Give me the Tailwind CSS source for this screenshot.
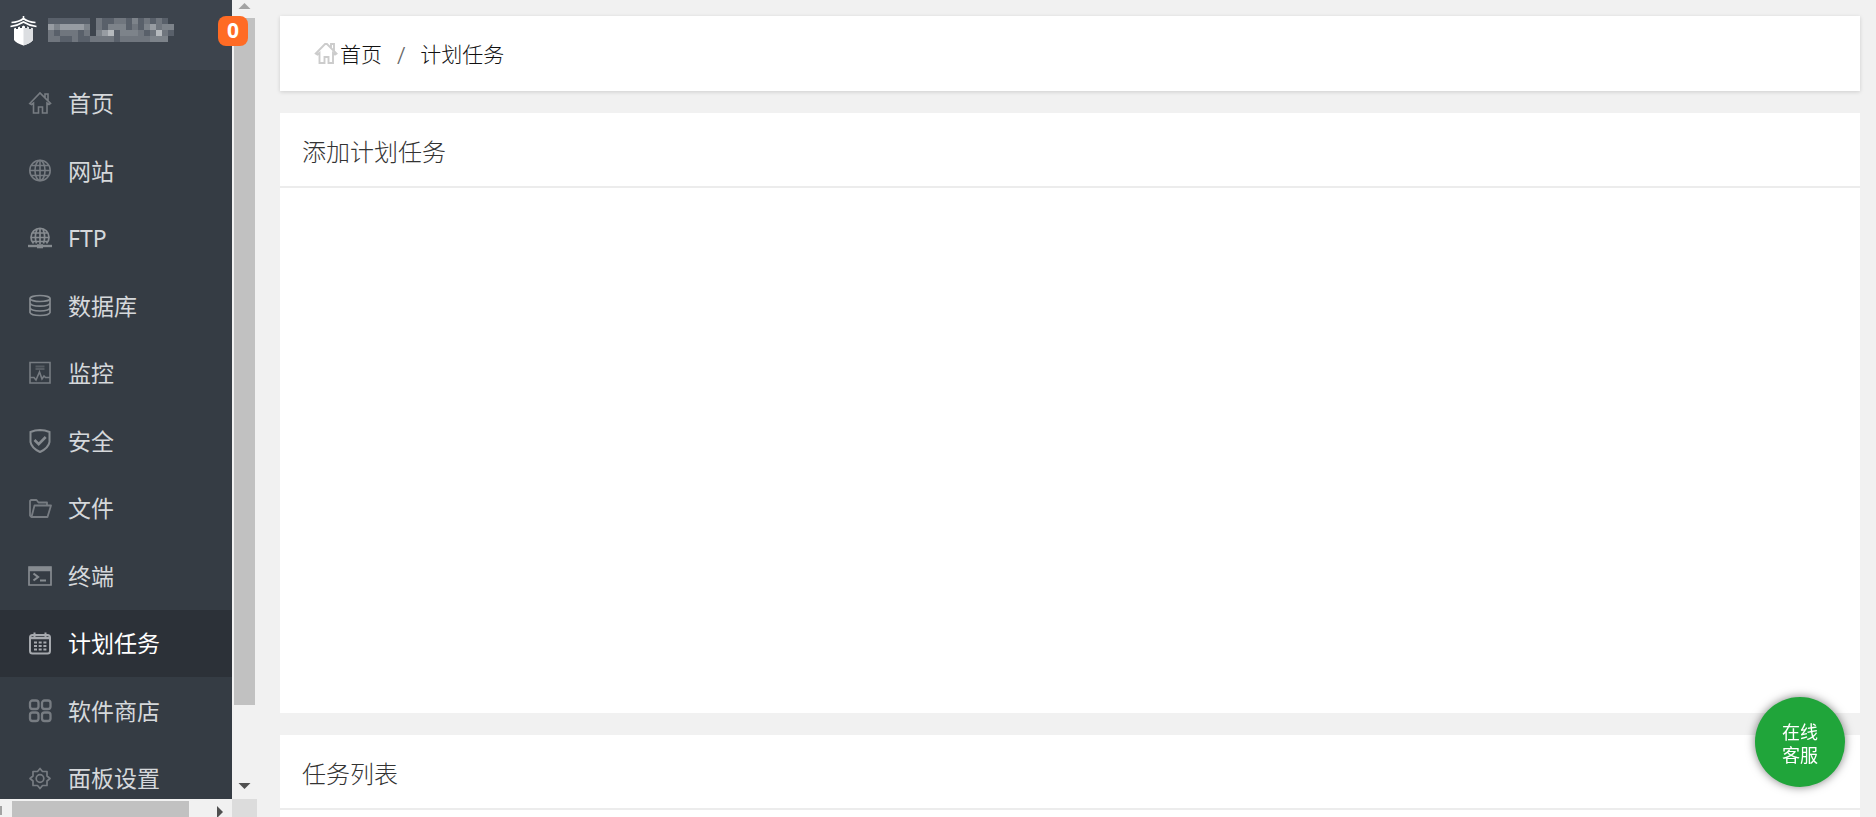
<!DOCTYPE html>
<html lang="zh-CN">
<head>
    <meta charset="UTF-8">
    <meta name="viewport" content="width=device-width, initial-scale=1.0">
    <title>计划任务</title>
    <script src="https://cdn.jsdelivr.net/npm/@tailwindcss/browser@4"></script>
</head>
<body class="flex h-screen overflow-hidden bg-[#f1f1f1] font-['Noto_Sans','Noto_Sans_CJK_SC',sans-serif]">
    <!-- Sidebar with its scrollbars -->
    <aside class="relative grid shrink-0 grid-cols-[232px_25px] grid-rows-[minmax(0,1fr)_18px]">
        <div class="overflow-hidden bg-[#353c44]">
            <div class="flex h-[70px] items-start gap-[11px] bg-[#3d444d] px-2.5 pt-4">
                <svg class="h-[30px] w-[27px] shrink-0" viewBox="0 0 27 30">
                    <path d="M13.500 0v3M1.500 6.500Q9 6 13.500 2.500 18 6 25.500 6.500M.5 10.500Q8 9.500 13.500 6 19 9.500 26.500 10.500" fill="none" stroke="#fff" stroke-width="1.600"/>
                    <path d="M4 12.500l2-.7v1.200h2v-1.800l2-.8v1.500h2v-1.500l1.500-.8 1.500.8v1.500h2v-1.500l2 .8v1.800h2v-1.200l2 .7V24q-2 3-9.500 5.500Q6 27 4 24z" fill="#fff"/>
                    <path d="M13.500 12H17v-1.500l2 .8v1.800h2v-1.200l2 .7V24q-2 3-9.500 5.500z" fill="#dcdee1"/>
                </svg>
                <!-- Masked account name -->
                <svg class="mt-0.5 h-6 w-[126px] shrink-0" viewBox="0 0 21 4" shape-rendering="crispEdges" fill="none" stroke-width="1">
                    <g stroke="#7d838a">
                        <path d="M0 1.500h4M5 1.500h2M8 2.500h1M10 1.500h3M12 2.500h2M14 .5h1M14 2.500h1M16 1.500h2M17 3.500h3M19 1.500h2"/>
                    </g>
                    <g stroke="#979ca2">
                        <path d="M0 1.500h1M2 1.500h2M4 1.500h2M9 2.500h2M18 2.500h1M17 1.500h1"/>
                    </g>
                    <g stroke="#70767e">
                        <path d="M0 2.500h1M2 2.500h3M6 2.500h1M0 3.500h2M4 3.500h1M7 3.500h4M8 .5h1M8 1.500h1M11 .5h1M12 3.500h3M12 .5h1M14 1.500h1M15 3.500h2M16 .5h1M17 2.500h1M18 .5h1M19 2.500h1M15 2.500h1M18 1.500h1"/>
                    </g>
                    <g stroke="#59606a">
                        <path d="M0 .5h7M1 2.500h1M5 2.500h1M2 3.500h2M5 3.500h2M9 .5h2M9 1.500h1M11 2.500h1M11 3.500h1M13 .5h1M13 1.500h1M15 .5h1M15 1.500h1M16 2.500h1M17 .5h1M19 .5h1M20 2.500h1"/>
                    </g>
                    <path d="M10 2.500h1M18 2.500h1" stroke="#b5b9bd"/>
                </svg>
            </div>
            <!-- Menu -->
            <nav>
                <ul class="grid h-[742px] auto-rows-fr gap-px text-[23px] text-[#d5d8db]">
                    <li><a href="#" class="flex h-full items-center gap-4 pl-7">
                        <svg class="size-6 shrink-0 text-[#777c82]" viewBox="0 0 24 24" fill="none" stroke="currentColor" stroke-width="1.600"><path d="M1.800 12.500L12 2l10.500 10.500-1.500 1-2-1.500v10h-4.500v-6h-4v6H5.500V12l-2 1.500zM17 6.500V3h3v6.500"/></svg>
                        首页</a></li>
                    <li><a href="#" class="flex h-full items-center gap-4 pl-7">
                        <svg class="size-6 shrink-0 text-[#777c82]" viewBox="0 0 24 24" fill="none" stroke="currentColor" stroke-width="1.600"><circle cx="12" cy="11.500" r="10.200"/><ellipse cx="12" cy="11.500" rx="5" ry="10"/><path d="M12 1.500v20M2 11.500h20M4 6.500h16M4 16.500h16"/></svg>
                        网站</a></li>
                    <li><a href="#" class="flex h-full items-center gap-4 pl-7">
                        <svg class="size-6 shrink-0 text-[#868b90]" viewBox="0 0 24 24" fill="none" stroke="currentColor" stroke-width="1.700"><path d="M5.500 17.500a9 9 0 1 1 13 0M8.500 17.500Q6 10 9 3.500M15.500 17.500Q18 10 15 3.500M12 2v16M3 11.500h18M5 7h14M5 15.500h14"/><path d="M0 20h24" stroke-width="2.400"/><path d="M9 20.300h6" stroke-width="4"/></svg>
                        FTP</a></li>
                    <li><a href="#" class="flex h-full items-center gap-4 pl-7">
                        <svg class="size-6 shrink-0 text-[#868b90]" viewBox="0 0 24 24" fill="none" stroke="currentColor" stroke-width="1.700"><ellipse cx="12" cy="4.500" rx="10" ry="3"/><path d="M2 4.500v14q1 3 10 3t10-3v-14M2 9q1 3.200 10 3.200T22 9M2 13.800Q3 17 12 17t10-3.200"/></svg>
                        数据库</a></li>
                    <li><a href="#" class="flex h-full items-center gap-4 pl-7">
                        <svg class="size-6 shrink-0 text-[#777c82]" viewBox="0 0 24 24" fill="none" stroke="currentColor" stroke-width="1.600"><path d="M2 1.500h20v20.500H2zM2 16.500h4l2 2.500 3.500-8 2.500 7 2-3 1.500 1.500H22"/><path d="M7.500 5.500h9M7.500 8h9" stroke-width="1.800" opacity=".5"/></svg>
                        监控</a></li>
                    <li><a href="#" class="flex h-full items-center gap-4 pl-7">
                        <svg class="size-6 shrink-0 text-[#868b90]" viewBox="0 0 24 24" fill="none" stroke="currentColor" stroke-width="2"><path d="M12 1Q7 1.200 2.500 3v10q1 6 9.500 10 8.500-4 9.500-10V3Q17 1.200 12 1z"/><path d="M6.500 11l4.200 4.200 7-7.200" stroke-width="2.600"/></svg>
                        安全</a></li>
                    <li><a href="#" class="flex h-full items-center gap-4 pl-7">
                        <svg class="size-6 shrink-0 text-[#777c82]" viewBox="0 0 24 24" fill="none" stroke="currentColor" stroke-width="1.800" stroke-linejoin="round"><path d="M3.500 20L2 18.500V4l1-1h5.500l2 2.500H19V8M3.500 20L6.500 8.500h16.500L19.500 20z"/></svg>
                        文件</a></li>
                    <li><a href="#" class="flex h-full items-center gap-4 pl-7">
                        <svg class="size-6 shrink-0 text-[#868b90]" viewBox="0 0 24 24" fill="none" stroke="currentColor" stroke-width="1.700"><path d="M1 3h22v18H1z"/><path d="M1 5h22" stroke-width="4.500"/><path d="M5.500 9.500l4.500 3.500-4.500 3.500M12 16.500h6" stroke-width="2.200"/></svg>
                        终端</a></li>
                    <li><a href="#" class="flex h-full items-center gap-4 bg-[#2c3138] pl-7 text-white">
                        <svg class="size-6 shrink-0 text-[#a6a9ae]" viewBox="0 0 24 24" fill="none" stroke="currentColor" stroke-width="2"><rect x="2" y="3" width="20" height="18.500" rx="2.500"/><path d="M2 6h20" stroke-width="2.500"/><path d="M6.500.5v5M17.500.5v5"/><path d="M6 10.500h12.500M6 14h12.500M6 17.500h12.500" stroke-width="2.200" stroke-dasharray="3 1.700"/></svg>
                        计划任务</a></li>
                    <li><a href="#" class="flex h-full items-center gap-4 pl-7">
                        <svg class="size-6 shrink-0 text-[#777c82]" viewBox="0 0 24 24" fill="none" stroke="currentColor" stroke-width="2.300"><rect x="2" y="1.500" width="8.500" height="8.500" rx="2.500"/><rect x="14" y="1.500" width="8.500" height="8.500" rx="2.500"/><rect x="2" y="13.500" width="8.500" height="8.500" rx="2.500"/><rect x="14" y="13.500" width="8.500" height="8.500" rx="2.500"/></svg>
                        软件商店</a></li>
                    <li><a href="#" class="flex h-full items-center gap-4 pl-7">
                        <svg class="size-6 shrink-0 text-[#777c82]" viewBox="0 0 24 24" fill="none" stroke="currentColor" stroke-width="1.700" stroke-linejoin="round"><path d="M12 1.500l2.500 3h4.500v4.500l3 2.500-3 2.500v4.500h-4.500l-2.500 3-2.500-3H5V14l-3-2.500L5 9V4.500h4.500z"/><circle cx="12" cy="11.500" r="3.800"/></svg>
                        面板设置</a></li>
                </ul>
            </nav>
        </div>

        <!-- Vertical scrollbar -->
        <div class="flex flex-col">
            <svg class="h-[18px] w-[25px] shrink-0" viewBox="0 0 25 18"><path d="M6.500 9l6-6 6 6z" fill="#a3a3a3"/></svg>
            <div class="ml-0.5 w-[21px] grow bg-[#c1c1c1]"></div>
            <div class="flex h-[94px] shrink-0 items-end">
                <svg class="h-[18px] w-[25px]" viewBox="0 0 25 18"><path d="M6.500 2l6 6 6-6z" fill="#505050"/></svg>
            </div>
        </div>

        <!-- Horizontal scrollbar -->
        <div class="flex items-end">
            <svg class="h-[18px] w-3 shrink-0" viewBox="0 0 12 18"><path d="M0 7h2v9H0z" fill="#a3a3a3"/></svg>
            <div class="h-4 grow bg-[#c1c1c1]"></div>
            <svg class="h-[18px] w-[43px] shrink-0" viewBox="0 0 43 18"><path d="M28 7l6 6-6 6z" fill="#505050"/></svg>
        </div>
        <div class="bg-[#dcdcdc]"></div>

        <!-- Message badge -->
        <span class="absolute right-[9px] top-4 flex size-[30px] items-center justify-center rounded-lg bg-[#ff6b24] text-[21px] font-bold text-white">0</span>
    </aside>

    <main class="flex min-w-0 grow flex-col gap-[22px] overflow-hidden pl-[23px] pr-4 pt-4">
        <nav class="flex h-[75px] shrink-0 items-center bg-white pl-[34px] pt-0.5 text-[21px] font-light text-[#111] shadow-[0_1px_4px_rgba(0,0,0,0.15)]">
            <a href="#" class="flex items-center gap-0.5">
                <svg class="size-6 shrink-0 text-[#ccc]" viewBox="0 0 24 24" fill="none" stroke="currentColor" stroke-width="1.900"><path d="M1.800 10.500L12 0l10.500 10.500-1.500 1-2-1.500v10h-4.500v-6h-4v6H5.500V10l-2 1.500zM17 4.500V1h3v6.500"/></svg>
                首页
            </a>
            <span class="px-[15px] text-2xl text-[#666]">/</span>
            <span>计划任务</span>
        </nav>

        <section class="shrink-0 bg-white">
            <h2 class="flex h-[75px] items-center border-b-2 border-[#ececec] pl-[22px] pt-1 text-2xl font-light text-[#333]">添加计划任务</h2>
            <div class="h-[525px]"></div>
        </section>

        <section class="shrink-0 bg-white">
            <h2 class="flex h-[75px] items-center border-b-2 border-[#ececec] pl-[22px] pt-1 text-2xl font-light text-[#333]">任务列表</h2>
            <div class="h-[525px]"></div>
        </section>
    </main>

    <!-- Online support -->
    <button type="button" class="fixed bottom-[30px] right-[31px] size-[90px] rounded-full bg-[#20a53a] pt-1 text-lg leading-[23px] text-white shadow-[0_0_10px_rgba(0,0,0,0.5)]">在线<br>客服</button>
</body>
</html>
